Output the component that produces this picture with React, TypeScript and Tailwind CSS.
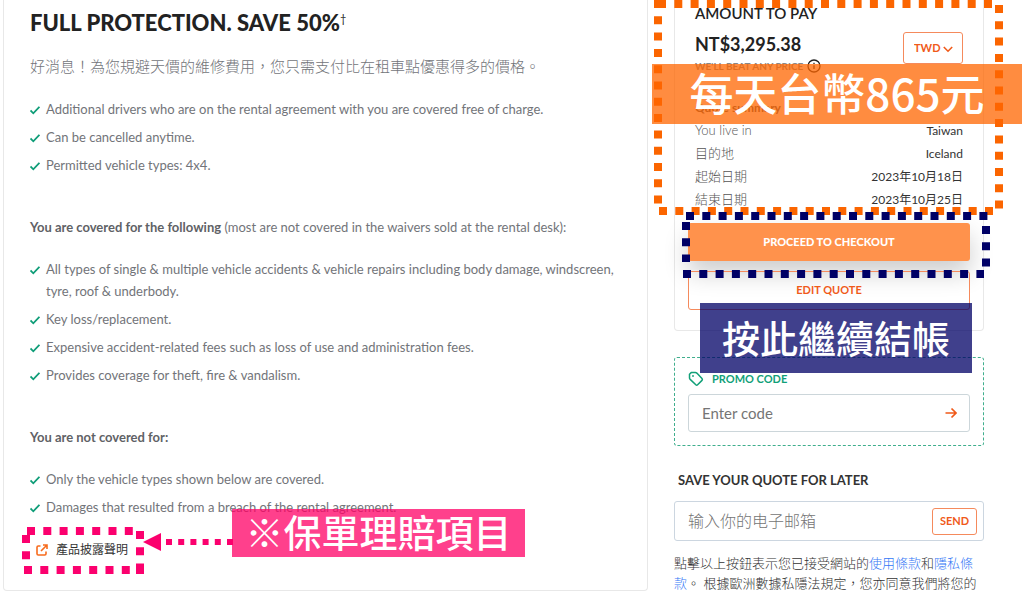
import { useState } from 'react'
import type { ReactNode } from 'react'

const includedItems = [
  'Additional drivers who are on the rental agreement with you are covered free of charge.',
  'Can be cancelled anytime.',
  'Permitted vehicle types: 4x4.',
]

const coveredItems = [
  'All types of single & multiple vehicle accidents & vehicle repairs including body damage, windscreen, tyre, roof & underbody.',
  'Key loss/replacement.',
  'Expensive accident-related fees such as loss of use and administration fees.',
  'Provides coverage for theft, fire & vandalism.',
]

const notCoveredItems = [
  'Only the vehicle types shown below are covered.',
  'Damages that resulted from a breach of the rental agreement.',
]

const quoteSummary = [
  { label: 'You live in', value: 'Taiwan' },
  { label: '目的地', value: 'Iceland' },
  { label: '起始日期', value: '2023年10月18日' },
  { label: '結束日期', value: '2023年10月25日' },
]

function CheckList({ items }: { items: string[] }) {
  return (
    <ul className="mt-5 space-y-1.5 pr-1">
      {items.map((item) => (
        <li key={item} className="flex gap-1.5">
          <svg className="mt-1.5 h-3 w-2.5 shrink-0" viewBox="0 0 10 12" fill="none" stroke="#0f9d78" strokeWidth="1.8">
            <path d="M0.5 6.5 3.3 9.3 9.4 2.8" />
          </svg>
          <span>{item}</span>
        </li>
      ))}
    </ul>
  )
}

function Callout({ className, children }: { className: string; children: ReactNode }) {
  return (
    <p
      className={`pointer-events-none absolute z-20 flex items-center justify-center pb-1 whitespace-nowrap font-['Noto_Sans_CJK_TC',sans-serif] font-medium text-white ${className}`}
    >
      {children}
    </p>
  )
}

function CoveragePanel() {
  return (
    <section className="relative min-w-0 flex-1 rounded-b border border-t-0 border-[#e8e8e8] px-[26px] pt-[7px] pb-7 text-[13px] leading-[22px] text-[#727479]">
      <h1 className="text-[22px] leading-8 font-black text-[#222]">
        FULL PROTECTION. SAVE 50%
        <sup className="top-[-8px] text-[11px] font-normal">†</sup>
      </h1>
      <p className="mt-[15px] text-[15px] leading-6 font-light">
        好消息！為您規避天價的維修費用，您只需支付比在租車點優惠得多的價格。
      </p>
      <CheckList items={includedItems} />

      <p className="mt-10">
        <strong className="font-bold text-[#5f6266]">You are covered for the following</strong> (most are not covered in
        the waivers sold at the rental desk):
      </p>
      <CheckList items={coveredItems} />

      <p className="mt-10 font-bold text-[#5f6266]">You are not covered for:</p>
      <CheckList items={notCoveredItems} />

      <button type="button" className="mt-5 ml-1.5 flex h-6 items-center gap-2 text-[12px] text-[#333]">
        <svg className="h-3 w-3" viewBox="0 0 12 12" fill="none" stroke="#f76b1c" strokeWidth="1.6">
          <path d="M4.5 2H2.2Q1 2 1 3.2v6.6Q1 11 2.2 11h6.6Q10 11 10 9.8V7.5M7 1h4v4M11 1 5 7" />
        </svg>
        產品披露聲明
      </button>

      {/* Marker round the disclosure link */}
      <svg
        className="pointer-events-none absolute bottom-3.5 left-[18px] z-10 h-[50px] w-[212px]"
        viewBox="0 0 212 50"
        fill="none"
        stroke="#fb006e"
        strokeWidth="8"
      >
        <path d="M5 5H111M4 9V35M118 5V45M2 44H122" strokeDasharray="8 8.3" />
        <path d="M114 44H122" />
        <path d="M144 16H212" strokeWidth="6" strokeDasharray="6 6.2" />
        <path d="M121 16 139 7V25Z" fill="#fb006e" stroke="none" />
      </svg>
      <Callout className="bottom-[33px] left-[228px] h-12 w-[293px] bg-[#ff0066]/75 text-[38px]">※保單理賠項目</Callout>
    </section>
  )
}

function QuoteCard() {
  const [currency, setCurrency] = useState('TWD')

  return (
    <section className="rounded-b border border-t-0 border-[#e8e8e8] px-[13px] pt-[3px] pb-5">
      <div className="px-[7px]">
        <h2 className="text-[15px] leading-5 font-semibold text-[#222]">AMOUNT TO PAY</h2>
        <div className="mt-[9px] flex items-start justify-between">
          <div>
            <p className="text-[18px] leading-6 font-bold text-[#222]">NT$3,295.38</p>
            <p className="flex items-center gap-1 text-[10px] leading-5 font-bold text-[#888]">
              WE'LL BEAT ANY PRICE
              <svg className="h-3.5 w-3.5" viewBox="0 0 14 14" fill="none" stroke="#222" strokeWidth="1.3">
                <circle cx="7" cy="7" r="6" />
                <path d="M7 6.2V10M7 3.8V5" />
              </svg>
            </p>
          </div>
          <div className="relative">
            <select
              aria-label="Currency"
              value={currency}
              onChange={(e) => setCurrency(e.target.value)}
              className="h-8 w-[60px] appearance-none rounded-[3px] border border-[#f58a5c] pl-2.5 text-[11px] font-bold text-[#f05a1a]"
            >
              <option>TWD</option>
              <option>USD</option>
              <option>EUR</option>
            </select>
            <svg
              className="pointer-events-none absolute top-3 right-2.5 h-2.5 w-2.5"
              viewBox="0 0 10 10"
              fill="none"
              stroke="#f05a1a"
              strokeWidth="1.6"
            >
              <path d="M0.8 3 5 7.2 9.2 3" />
            </svg>
          </div>
        </div>

        <h3 className="mt-[22px] text-[12px] leading-5 font-bold text-[#555]">Quote summary</h3>
        <dl className="mt-px leading-[23px]">
          {quoteSummary.map((row) => (
            <div key={row.label} className="flex justify-between">
              <dt className="text-[13px] font-light text-[#555]">{row.label}</dt>
              <dd className="text-[12px] text-[#333]">{row.value}</dd>
            </div>
          ))}
        </dl>
      </div>

      <button
        type="button"
        className="mt-3 block h-[38px] w-full rounded-[3px] bg-[#ff924c] text-[11px] font-black text-white shadow-[0_12px_24px_rgba(0,0,0,0.2)]"
      >
        PROCEED TO CHECKOUT
      </button>
      <button
        type="button"
        className="mt-2.5 block h-[39px] w-full rounded-[3px] border border-[#f58a5c] text-[11px] font-bold text-[#f05a1a]"
      >
        EDIT QUOTE
      </button>
    </section>
  )
}

function PromoCode() {
  return (
    <form className="mt-[26px] rounded-[3px] border border-dashed border-[#3fae8d] px-[13px] pt-[11px] pb-[13px]">
      <label htmlFor="promo" className="flex items-center gap-2 text-[11px] leading-5 font-bold text-[#12a078]">
        <svg className="h-4 w-4" viewBox="0 0 16 16" fill="none" stroke="#12a078" strokeWidth="1.5" strokeLinejoin="round">
          <path d="M1.5 3.2 3.2 1.6 7.4 1.5Q8.2 1.5 8.8 2.1L14 7.6Q14.8 8.5 14 9.4L9.6 13.8Q8.7 14.7 7.8 13.8L2.2 8.4Q1.5 7.8 1.5 7Z" />
          <circle cx="5" cy="5" r="0.6" strokeWidth="1" />
        </svg>
        PROMO CODE
      </label>
      <div className="mt-[5px] flex h-[38px] items-center rounded-[3px] border border-[#ccd6da] pr-3 pl-[13px]">
        <input
          id="promo"
          type="text"
          placeholder="Enter code"
          className="min-w-0 flex-1 text-[15px] outline-none placeholder:text-[#757575]"
        />
        <button type="button" aria-label="Apply code">
          <svg className="h-3 w-3" viewBox="0 0 12 12" fill="none" stroke="#f05a1a" strokeWidth="1.7">
            <path d="M0.5 6H11M6.5 1.5 11 6 6.5 10.5" />
          </svg>
        </button>
      </div>
    </form>
  )
}

function SaveQuote() {
  return (
    <form className="mt-6">
      <label htmlFor="email" className="block pl-1 text-[13px] leading-5 font-bold text-[#333]">
        SAVE YOUR QUOTE FOR LATER
      </label>
      <div className="mt-[11px] flex h-10 items-center rounded-[3px] border border-[#ccd6e0] pr-1.5 pl-[13px]">
        <input
          id="email"
          type="email"
          placeholder="输入你的电子邮箱"
          className="min-w-0 flex-1 font-['Lato','Noto_Sans_CJK_SC',sans-serif] text-[16px] font-light outline-none placeholder:text-[#757575]"
        />
        <button type="button" className="h-[27px] w-[45px] rounded-[3px] border border-[#f58a5c] text-[11px] font-bold text-[#f05a1a]">
          SEND
        </button>
      </div>
      <p className="mt-3 text-[13px] leading-5 font-light text-[#333]">
        點擊以上按鈕表示您已接受網站的
        <a href="#terms" className="text-[#3478f6]">使用條款</a>和<a href="#privacy" className="text-[#3478f6]">隱私條款</a>。
        根據歐洲數據私隱法規定，您亦同意我們將您的
      </p>
    </form>
  )
}

export default function App() {
  return (
    <main className="flex items-start gap-[26px] overflow-hidden bg-white pr-10 pl-[3px] font-['Lato','Noto_Sans_CJK_TC',sans-serif]">
      <CoveragePanel />
      <aside className="relative w-[310px] shrink-0">
        <QuoteCard />
        <PromoCode />
        <SaveQuote />

        {/* Markers round the price summary and the checkout button */}
        <svg
          className="pointer-events-none absolute top-0 left-[-20px] z-10 h-[280px] w-[350px]"
          viewBox="0 0 350 280"
          fill="none"
          strokeWidth="8"
          strokeDasharray="8 8.3"
        >
          <path d="M4 4H339M4 0V204M345 5V209M5 211H339" stroke="#fb6500" />
          <path d="M32 216H336M32 222V262M332 226V267M29 274H330" stroke="#000066" />
        </svg>
        <Callout className="top-16 -right-[38px] -left-[22px] h-[60px] bg-[#ff6600]/75 text-[44px]">每天台幣865元</Callout>
        <Callout className="top-[303px] right-3 left-[26px] h-[70px] bg-[#000066]/75 text-[38px]">按此繼續結帳</Callout>
      </aside>
    </main>
  )
}
